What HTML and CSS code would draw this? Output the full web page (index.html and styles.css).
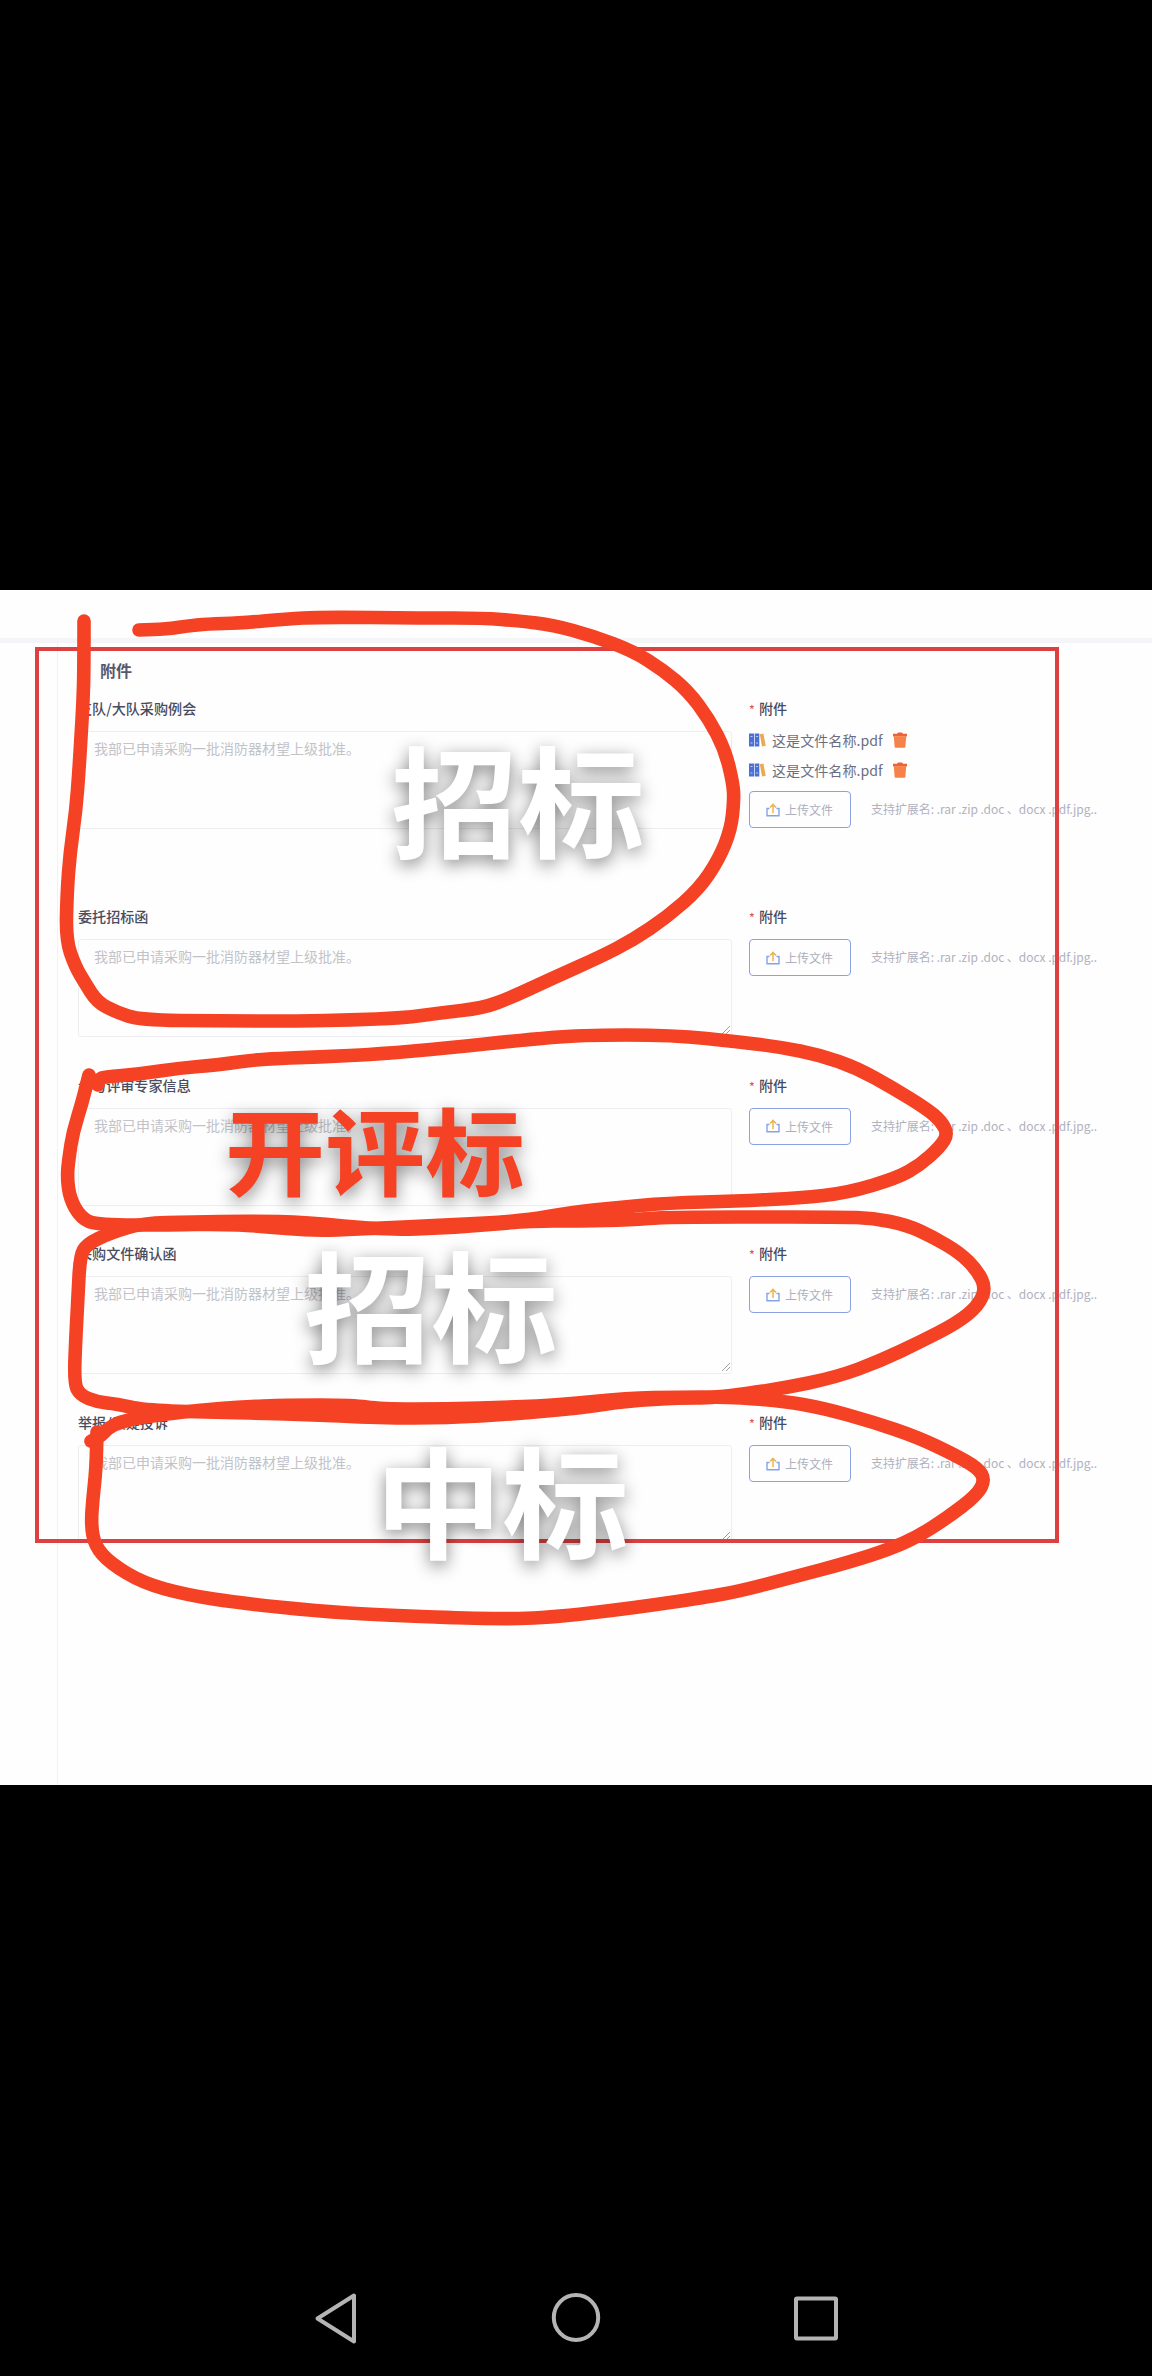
FILE: index.html
```
<!DOCTYPE html>
<html lang="zh-CN">
<head>
<meta charset="utf-8">
<title>附件</title>
<link rel="stylesheet" href="styles.css">
</head>
<body>
<svg class="defs" width="0" height="0">
  <symbol id="books" viewBox="0 0 17 14">
    <rect x="0" y="0.5" width="5" height="13" fill="#4a70d8"/>
    <rect x="5.7" y="0.5" width="4.6" height="13" fill="#4a70d8"/>
    <path d="M1.5 3.5h2M1.5 10h2M7 3.5h2M7 10h2" stroke="#b9cbf8" stroke-width="1.2"/>
    <path d="M10.8 1.2l3.6-.8 2.3 12.4-3.7.8z" fill="#e9aa50"/>
  </symbol>
  <symbol id="trash" viewBox="0 0 14 16">
    <path d="M0 1.800h4L5 .6h4l1 1.200h4v2.600H0z" fill="#ee6236"/>
    <path d="M.8 4.200h12.400l-.8 10.300q-.1 1.200-1.200 1.200H2.800q-1.100 0-1.200-1.200z" fill="#f58248"/>
  </symbol>
  <symbol id="upload" viewBox="0 0 14 14">
    <path d="M3.500 5.500H1v7.300h12V5.500h-2.500" fill="none" stroke="#86a3e6" stroke-width="1.400"/>
    <path d="M7 10V1.800M4 4.600l3-3.200 3 3.200" fill="none" stroke="#ecb552" stroke-width="1.500"/>
  </symbol>
</svg>
<main class="screen">
  <section class="page">
    <header class="topbar"></header>
    <div class="body">
      <div class="content">
        <h1 class="title">附件</h1>
        <div class="row row-first">
          <div class="field">
            <div class="label">支队/大队采购例会</div>
            <div class="area">我部已申请采购一批消防器材望上级批准。</div>
          </div>
          <div class="attach">
            <div class="label"><span class="star">*</span>附件</div>
            <div class="file"><svg class="books"><use href="#books"/></svg><span>这是文件名称.pdf</span><svg class="trash"><use href="#trash"/></svg></div>
            <div class="file"><svg class="books"><use href="#books"/></svg><span>这是文件名称.pdf</span><svg class="trash"><use href="#trash"/></svg></div>
            <div class="upload"><span class="button"><svg class="up"><use href="#upload"/></svg>上传文件</span><span class="hint">支持扩展名: .rar .zip .doc 、docx .pdf.jpg..</span></div>
          </div>
        </div>
        <div class="row">
          <div class="field">
            <div class="label">委托招标函</div>
            <div class="area">我部已申请采购一批消防器材望上级批准。<svg class="grip" viewBox="0 0 10 10"><path d="M1 9l8-8M5 9l4-4"/></svg></div>
          </div>
          <div class="attach">
            <div class="label"><span class="star">*</span>附件</div>
            <div class="upload"><span class="button"><svg class="up"><use href="#upload"/></svg>上传文件</span><span class="hint">支持扩展名: .rar .zip .doc 、docx .pdf.jpg..</span></div>
          </div>
        </div>
        <div class="row">
          <div class="field">
            <div class="label">参与评审专家信息</div>
            <div class="area">我部已申请采购一批消防器材望上级批准。</div>
          </div>
          <div class="attach">
            <div class="label"><span class="star">*</span>附件</div>
            <div class="upload"><span class="button"><svg class="up"><use href="#upload"/></svg>上传文件</span><span class="hint">支持扩展名: .rar .zip .doc 、docx .pdf.jpg..</span></div>
          </div>
        </div>
        <div class="row">
          <div class="field">
            <div class="label">采购文件确认函</div>
            <div class="area">我部已申请采购一批消防器材望上级批准。<svg class="grip" viewBox="0 0 10 10"><path d="M1 9l8-8M5 9l4-4"/></svg></div>
          </div>
          <div class="attach">
            <div class="label"><span class="star">*</span>附件</div>
            <div class="upload"><span class="button"><svg class="up"><use href="#upload"/></svg>上传文件</span><span class="hint">支持扩展名: .rar .zip .doc 、docx .pdf.jpg..</span></div>
          </div>
        </div>
        <div class="row">
          <div class="field">
            <div class="label">举报/质疑投诉</div>
            <div class="area">我部已申请采购一批消防器材望上级批准。<svg class="grip" viewBox="0 0 10 10"><path d="M1 9l8-8M5 9l4-4"/></svg></div>
          </div>
          <div class="attach">
            <div class="label"><span class="star">*</span>附件</div>
            <div class="upload"><span class="button"><svg class="up"><use href="#upload"/></svg>上传文件</span><span class="hint">支持扩展名: .rar .zip .doc 、docx .pdf.jpg..</span></div>
          </div>
        </div>
      </div>
    </div>
  </section>
  <nav class="nav">
    <svg viewBox="0 0 1152 60">
      <g fill="none" stroke="#b4b4b4" stroke-width="4" stroke-linejoin="round">
        <path d="M317.500 28.500L354 5.500V51.500z"/>
        <ellipse cx="576" cy="27.500" rx="22.200" ry="22.500"/>
        <rect x="796" y="8.500" width="40" height="40" rx="1"/>
      </g>
    </svg>
  </nav>
  <div class="frame"></div>
  <svg class="ink" viewBox="0 0 1152 2376">
    <g fill="none" stroke="#f54124" stroke-width="13.600" stroke-linecap="round" stroke-linejoin="round">
      <path data-points="84,621 84,670 83,703 81,737 79,770 76,810 70,853 67,893 66,940 75,966 85,983 97,1002 116,1012 140,1020 220,1021 300,1021 350,1020 403,1018 440,1013 483,1008 510,998 553,978 600,957 633,940 667,917 699,889 719,859 731,829 734,800 733,783 725,750 709,719 688,691 663,670 633,651 593,636 553,625 520,621 483,618 423,618 320,617 287,619 240,623 207,624 187,626 167,629 139,630"/>
      <path data-points="98,1085 99,1079 104,1077 140,1074 180,1068 217,1065 260,1059 320,1057 380,1054 447,1048 523,1040 580,1035 673,1035 740,1042 780,1047 820,1055 857,1068 893,1088 927,1109 941,1121 948,1134 940,1147 920,1165 897,1178 847,1193 800,1198 740,1201 667,1203 613,1208 573,1212 523,1221 447,1225 360,1229 313,1231 260,1226 217,1224 173,1225 97,1225 81,1218 70,1199 67,1177 69,1157 73,1132 82,1103 89,1075"/>
      <path data-points="740,1217 667,1217 630,1220 580,1221 527,1221 453,1228 380,1230 307,1222 250,1221 190,1222 143,1223 110,1233 87,1244 80,1256 78,1297 76,1333 74,1383 80,1395 97,1402 117,1404 143,1410 200,1412 300,1414 380,1418 447,1418 513,1414 580,1408 627,1401 680,1398 713,1398 780,1389 837,1377 880,1361 920,1342 957,1323 978,1306 986,1288 977,1270 960,1253 933,1237 907,1225 873,1218 840,1217 740,1217"/>
      <path data-points="91,1441 99,1438 108,1428 120,1422 143,1417 200,1410 240,1407 287,1405 353,1405 380,1409 447,1409 513,1407 560,1405 627,1398 680,1397 727,1397 783,1401 823,1408 873,1422 917,1437 953,1454 978,1468 985,1480 977,1495 947,1518 917,1537 890,1549 850,1562 790,1578 740,1591 707,1597 633,1608 547,1618 490,1619 380,1615 317,1611 240,1603 187,1595 143,1583 110,1563 95,1546 91,1525 93,1497 96,1470 97,1432"/>
    </g>
  </svg>
  <div class="mark mark-a">招标</div>
  <div class="mark mark-red">开评标</div>
  <div class="mark mark-b">招标</div>
  <div class="mark mark-c">中标</div>
</main>
<script src="ink.js"></script>
</body>
</html>
```
FILE: ink.js
```
// Turns each pen stroke's sampled points into a smooth curve through their midpoints.
document.querySelectorAll('.ink path').forEach(function (path) {
  var p = path.dataset.points.split(' ').map(function (s) { return s.split(',').map(Number); });
  var d = 'M' + p[0];
  for (var i = 1; i < p.length - 1; i++) {
    d += 'Q' + p[i] + ' ' + (p[i][0] + p[i + 1][0]) / 2 + ',' + (p[i][1] + p[i + 1][1]) / 2;
  }
  path.setAttribute('d', d + 'L' + p[p.length - 1]);
});
```
FILE: styles.css
```
* { box-sizing: border-box; }
body {
  margin: 0;
  background: #000;
  font-family: "Noto Sans CJK SC", "Noto Sans", sans-serif;
}
.defs { position: absolute; }
.screen {
  position: relative;
  display: flex;
  flex-direction: column;
  width: 1152px;
  height: 2376px;
  padding-top: 590px;
  background: #000;
  overflow: hidden;
}
.page {
  display: flex;
  flex-direction: column;
  height: 1195px;
  background: #fefefe;
}
.topbar {
  height: 53px;
  flex: none;
  border-bottom: 5px solid #f4f5f9;
}
.body {
  flex: 1;
  display: flex;
  margin-left: 57px;
  border-left: 1px solid #f1f2f5;
}
.content {
  flex: 1;
  padding: 15px 0 0 20px;
  min-width: 0;
}
.title {
  margin: 0 0 0 22px;
  height: 24px;
  font-size: 16px;
  line-height: 24px;
  font-weight: 700;
  color: #55596b;
}
.row {
  display: grid;
  grid-template-columns: 654px 1fr;
  column-gap: 17px;
  height: 168.600px;
}
.row-first {
  height: 208.300px;
  margin-top: 16px;
}
.label {
  height: 20px;
  margin-bottom: 13px;
  font-size: 14.100px;
  line-height: 20px;
  font-weight: 500;
  color: #484c60;
}
.star {
  display: inline-block;
  width: 10px;
  font-size: 12px;
  color: #e8545c;
}
.area {
  position: relative;
  height: 98px;
  padding: 7px 15px;
  border: 1.500px solid #eceef1;
  border-radius: 3px;
  font-size: 14px;
  line-height: 18px;
  color: #c2c3c9;
}
.grip {
  position: absolute;
  right: 0;
  bottom: 1px;
  width: 10px;
  height: 10px;
  fill: none;
  stroke: #a0a0a0;
}
.row-first .attach .label { margin-bottom: 7px; }
.file {
  display: flex;
  align-items: center;
  height: 30px;
  font-size: 14.100px;
  line-height: 30px;
  color: #6b6e80;
}
.file span { margin-top: -1px; }
.books { width: 17px; height: 14px; margin-right: 6px; }
.trash { width: 14px; height: 16px; margin-left: 10px; }
.upload {
  display: flex;
  align-items: center;
  white-space: nowrap;
}
.row-first .upload { margin-top: 6px; }
.button {
  display: flex;
  align-items: center;
  flex: none;
  gap: 5px;
  width: 102px;
  height: 37px;
  padding-left: 16px;
  border: 1.500px solid #8aa1e2;
  border-radius: 4px;
  font-size: 12px;
  color: #adb0bd;
}
.up { width: 14px; height: 14px; }
.hint {
  margin: -1px 0 0 20px;
  font-size: 12px;
  line-height: 20px;
  letter-spacing: -.05px;
  color: #b0b2be;
}
.nav { margin-top: 505px; height: 60px; }
.nav svg { display: block; width: 1152px; height: 60px; }
/* annotations drawn on top of the form */
.frame {
  position: absolute;
  left: 35px;
  top: 647px;
  width: 1024px;
  height: 896px;
  border: 4px solid #dc4040;
}
.ink {
  position: absolute;
  left: 0;
  top: 0;
  width: 1152px;
  height: 2376px;
}
.mark {
  position: absolute;
  font-size: 127px;
  line-height: 1;
  font-weight: 700;
  white-space: nowrap;
  color: #fff;
  text-shadow: 0 5px 18px rgba(0, 0, 0, .48);
  transform: scaleY(.95);
}
.mark-a { left: 391px; top: 734px; }
.mark-b { left: 304px; top: 1239px; }
.mark-c { left: 375px; top: 1435px; }
.mark-red { left: 225px; top: 1098px; font-size: 100px; color: #f54124; }
```
